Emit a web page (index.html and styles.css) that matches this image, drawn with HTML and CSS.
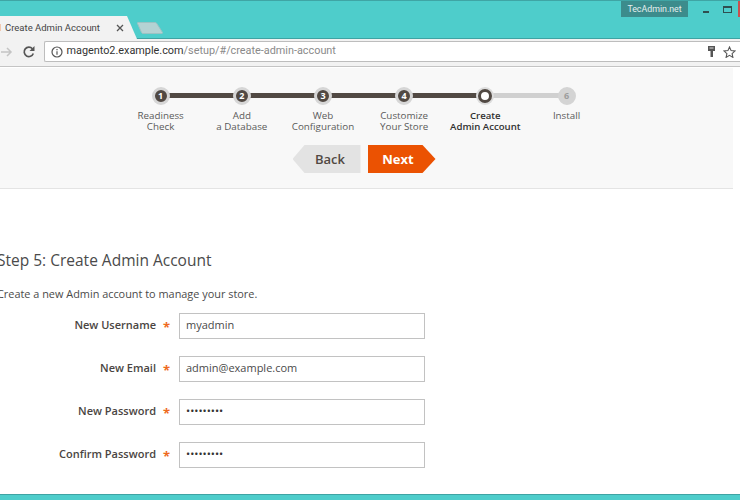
FILE: index.html
```html
<!DOCTYPE html>
<html lang="en">
<head>
<meta charset="utf-8">
<title>Create Admin Account</title>
<link rel="stylesheet" href="styles.css">
</head>
<body>
<div class="page">
  <header class="chrome">
    <div class="titlebar">
      <div class="tab">
        <span class="favicon"></span>
        <span class="tab-title">Create Admin Account</span>
        <svg class="tab-close" width="8" height="8" viewBox="0 0 8 8"><path d="M1 1l6 6M7 1L1 7" stroke="#555" stroke-width="1.3"/></svg>
      </div>
      <svg class="newtab" width="26" height="12" viewBox="0 0 26 12"><path d="M1 .5h17q1 0 1.800 1l5.700 9q.3 1-1 1H6q-1 0-1.500-1L.5 1.500Q.2.500 1 .5z" fill="#b5d2d3" stroke="#9cc2c3"/></svg>
      <div class="brand">TecAdmin.net</div>
      <div class="winctl">
        <span class="min"></span>
        <span class="max"></span>
        <span class="close"></span>
      </div>
    </div>
    <div class="toolbar">
      <svg class="arrow" width="12" height="12" viewBox="0 0 12 12"><path d="M0 6h10M6 2l4 4-4 4" fill="none" stroke="#c4c4c4" stroke-width="1.500"/></svg>
      <svg class="reload" width="14" height="14" viewBox="0 0 14 14"><path d="M11.300 8.500A4.700 4.700 0 1 1 10.400 3.700" fill="none" stroke="#555" stroke-width="1.700"/><path d="M12.500 1v5h-5z" fill="#555"/></svg>
      <div class="omnibox">
        <svg class="info" width="12" height="12" viewBox="0 0 12 12"><circle cx="6" cy="6" r="5" fill="none" stroke="#555" stroke-width="1.200"/><path d="M6 5.200v3.600M6 3v1.300" stroke="#555" stroke-width="1.200"/></svg>
        <span class="url"><span class="host">magento2.example.com</span>/setup/#/create-admin-account</span>
        <svg class="key" width="8" height="12" viewBox="0 0 8 12"><path d="M0 0h7v5H5v6H2.500V5H0z" fill="#555"/><path d="M1.500 2h4" stroke="#ddd"/></svg>
        <svg class="star" width="13" height="12" viewBox="0 0 13 12"><path d="M6.500 1l1.600 3.600 3.900.4-2.900 2.600.8 3.800-3.400-2-3.400 2 .8-3.800L1 5l3.900-.4z" fill="none" stroke="#555" stroke-width="1.100"/></svg>
      </div>
    </div>
  </header>

  <section class="wizard">
    <ol class="steps">
      <li class="step done"><span class="dot">1</span><span class="label">Readiness<br>Check</span></li>
      <li class="step done"><span class="dot">2</span><span class="label">Add<br>a Database</span></li>
      <li class="step done"><span class="dot">3</span><span class="label">Web<br>Configuration</span></li>
      <li class="step done"><span class="dot">4</span><span class="label">Customize<br>Your Store</span></li>
      <li class="step current"><span class="dot"></span><span class="label">Create<br>Admin Account</span></li>
      <li class="step todo"><span class="dot">6</span><span class="label">Install</span></li>
    </ol>
    <div class="actions">
      <button class="btn back">Back</button>
      <button class="btn next">Next</button>
    </div>
  </section>

  <main class="content">
    <h1>Step 5: Create Admin Account</h1>
    <p class="intro">Create a new Admin account to manage your store.</p>
    <form class="form">
      <label class="row"><span class="name">New Username</span><span class="req">*</span><span class="field">myadmin</span></label>
      <label class="row"><span class="name">New Email</span><span class="req">*</span><span class="field">admin@example.com</span></label>
      <label class="row"><span class="name">New Password</span><span class="req">*</span><span class="field dots">•••••••••</span></label>
      <label class="row"><span class="name">Confirm Password</span><span class="req">*</span><span class="field dots">•••••••••</span></label>
    </form>
  </main>
  <div class="bottom"></div>
</div>
</body>
</html>
```
FILE: styles.css
```css
* { box-sizing: border-box; }
html, body { margin: 0; padding: 0; }
body { background: #fff; font-family: "Open Sans", "Noto Sans", sans-serif; overflow: hidden; }
.page { width: 740px; height: 500px; display: flex; flex-direction: column; overflow: hidden; background: #fff; }

.chrome { flex: none; }
.titlebar { height: 39px; background: #4ecdcb; border-top: 1px solid #3fa5a5; border-bottom: 1px solid #3fa3a3; display: flex; align-items: flex-end; position: relative; }
.tab { width: 137px; height: 23px; margin-bottom: -1px; background: #f2f2f2; clip-path: polygon(0 0, 127px 0, 137px 100%, 0 100%); display: flex; align-items: center; }
.favicon { flex: none; width: 1px; height: 7px; margin-right: 4px; background: #f0c8b0; }
.tab-title { font: 9.500px/1 "Roboto", sans-serif; color: #444; width: 111px; white-space: nowrap; }
.newtab { margin: 0 0 4px 0; }
.brand { position: absolute; left: 621px; top: 0; width: 67px; height: 16px; background: #3c8c8c; color: #e6eeee; font: 8.800px/16px "Roboto", sans-serif; text-align: center; }
.winctl { position: absolute; right: 0; top: 0; height: 16px; }
.winctl span { position: absolute; display: block; }
.min { right: 31px; top: 10px; width: 6px; height: 2px; background: #2f4f50; }
.max { right: 8px; top: 5px; width: 9px; height: 7px; border: 1px solid #2f4f50; border-top-width: 2px; }
.close { right: 0; top: 0; width: 2px; height: 16px; background: #c9504f; }

.toolbar { height: 28px; background: #f2f2f2; border-bottom: 1px solid #c4c4c4; display: flex; align-items: center; padding: 0 0 2px 0; position: relative; }
.arrow { margin-left: 1px; }
.reload { margin-left: 9px; }
.omnibox { margin-left: 8px; flex: 1; height: 21px; background: #fff; border: 1px solid #bdbdbd; border-right: none; border-radius: 2px 0 0 2px; display: flex; align-items: center; padding: 0 4px 0 6px; }
.info { flex: none; }
.url { margin-left: 3.500px; font: 10.850px/1 "Roboto", sans-serif; color: #8a8a8a; flex: 1; white-space: nowrap; }
.host { color: #333; }
.key { margin-right: 7px; }

.wizard { flex: none; width: 733px; height: 121px; margin-top: 1px; background: #f8f8f8; border-bottom: 1px solid #e4e4e4; padding-top: 19px; }
.steps { list-style: none; margin: 0; padding: 0 0 0 120px; display: flex; }
.step { width: 81.200px; display: flex; flex-direction: column; align-items: center; position: relative; flex: none; }
.step::before { content: ""; position: absolute; top: 6px; left: 50%; width: 100%; height: 5px; background: #d0d0d0; }
.step:last-child::before { display: none; }
.step.done::before { background: #514943; }
.dot { width: 18px; height: 18px; border-radius: 50%; background: #514943; border: 3px solid #d6d6d6; color: #fff; font: 700 9px/12px "Open Sans", sans-serif; text-align: center; position: relative; z-index: 1; }
.current .dot { background: #fff; border: 3px solid #514943; box-shadow: 0 0 0 2px #dcdcdc; width: 14px; height: 14px; margin: 2px 0; }
.todo .dot { background: #d4d4d4; border-color: #d4d4d4; color: #9c9c9c; }
.label { margin-top: 5px; font: 9.800px/11px "Open Sans", sans-serif; color: #5a5a5a; text-align: center; white-space: nowrap; }
.current .label { color: #303030; font-size: 9.600px; font-weight: 600; }

.actions { display: flex; justify-content: center; gap: 7px; margin-top: 13px; width: 728px; }
.btn { border: 0; height: 28px; font: 600 13px/28px "Open Sans", sans-serif; padding: 0; }
.back { width: 68px; background: #e3e3e3; color: #514943; clip-path: polygon(12px 0, 100% 0, 100% 100%, 12px 100%, 0 50%); padding-left: 7px; }
.next { width: 68px; background: #eb5202; color: #fff; font-weight: 700; clip-path: polygon(0 0, 55px 0, 100% 50%, 55px 100%, 0 100%); padding-right: 7px; }

.content { flex: 1; margin-left: -3px; }
h1 { margin: 61px 0 0 0; font: 400 15.500px/20px "Open Sans", sans-serif; color: #4a4a4a; white-space: nowrap; }
.intro { margin: 16px 0 0 0; font: 400 10.900px/15px "Open Sans", sans-serif; color: #4a4a4a; white-space: nowrap; }
.form { display: flex; flex-direction: column; gap: 17px; margin-top: 12px; }
.row { display: flex; align-items: center; height: 26px; }
.name { width: 159px; padding-bottom: 3px; text-align: right; font: 600 11px/1 "Open Sans", sans-serif; color: #4a4542; white-space: nowrap; }
.req { width: 23px; padding: 3px 9px 0 0; text-align: right; font: 700 13px/1 "Open Sans", sans-serif; color: #ee6a1f; }
.field { width: 246px; height: 26px; border: 1px solid #c2c2c2; background: #fff; padding-left: 6px; font: 400 11px/22px "Open Sans", sans-serif; color: #4a4a4a; }
.field.dots { color: #333; }
.bottom { flex: none; height: 6px; background: #4ecdcb; border-top: 1px solid #3fa3a3; }
```
